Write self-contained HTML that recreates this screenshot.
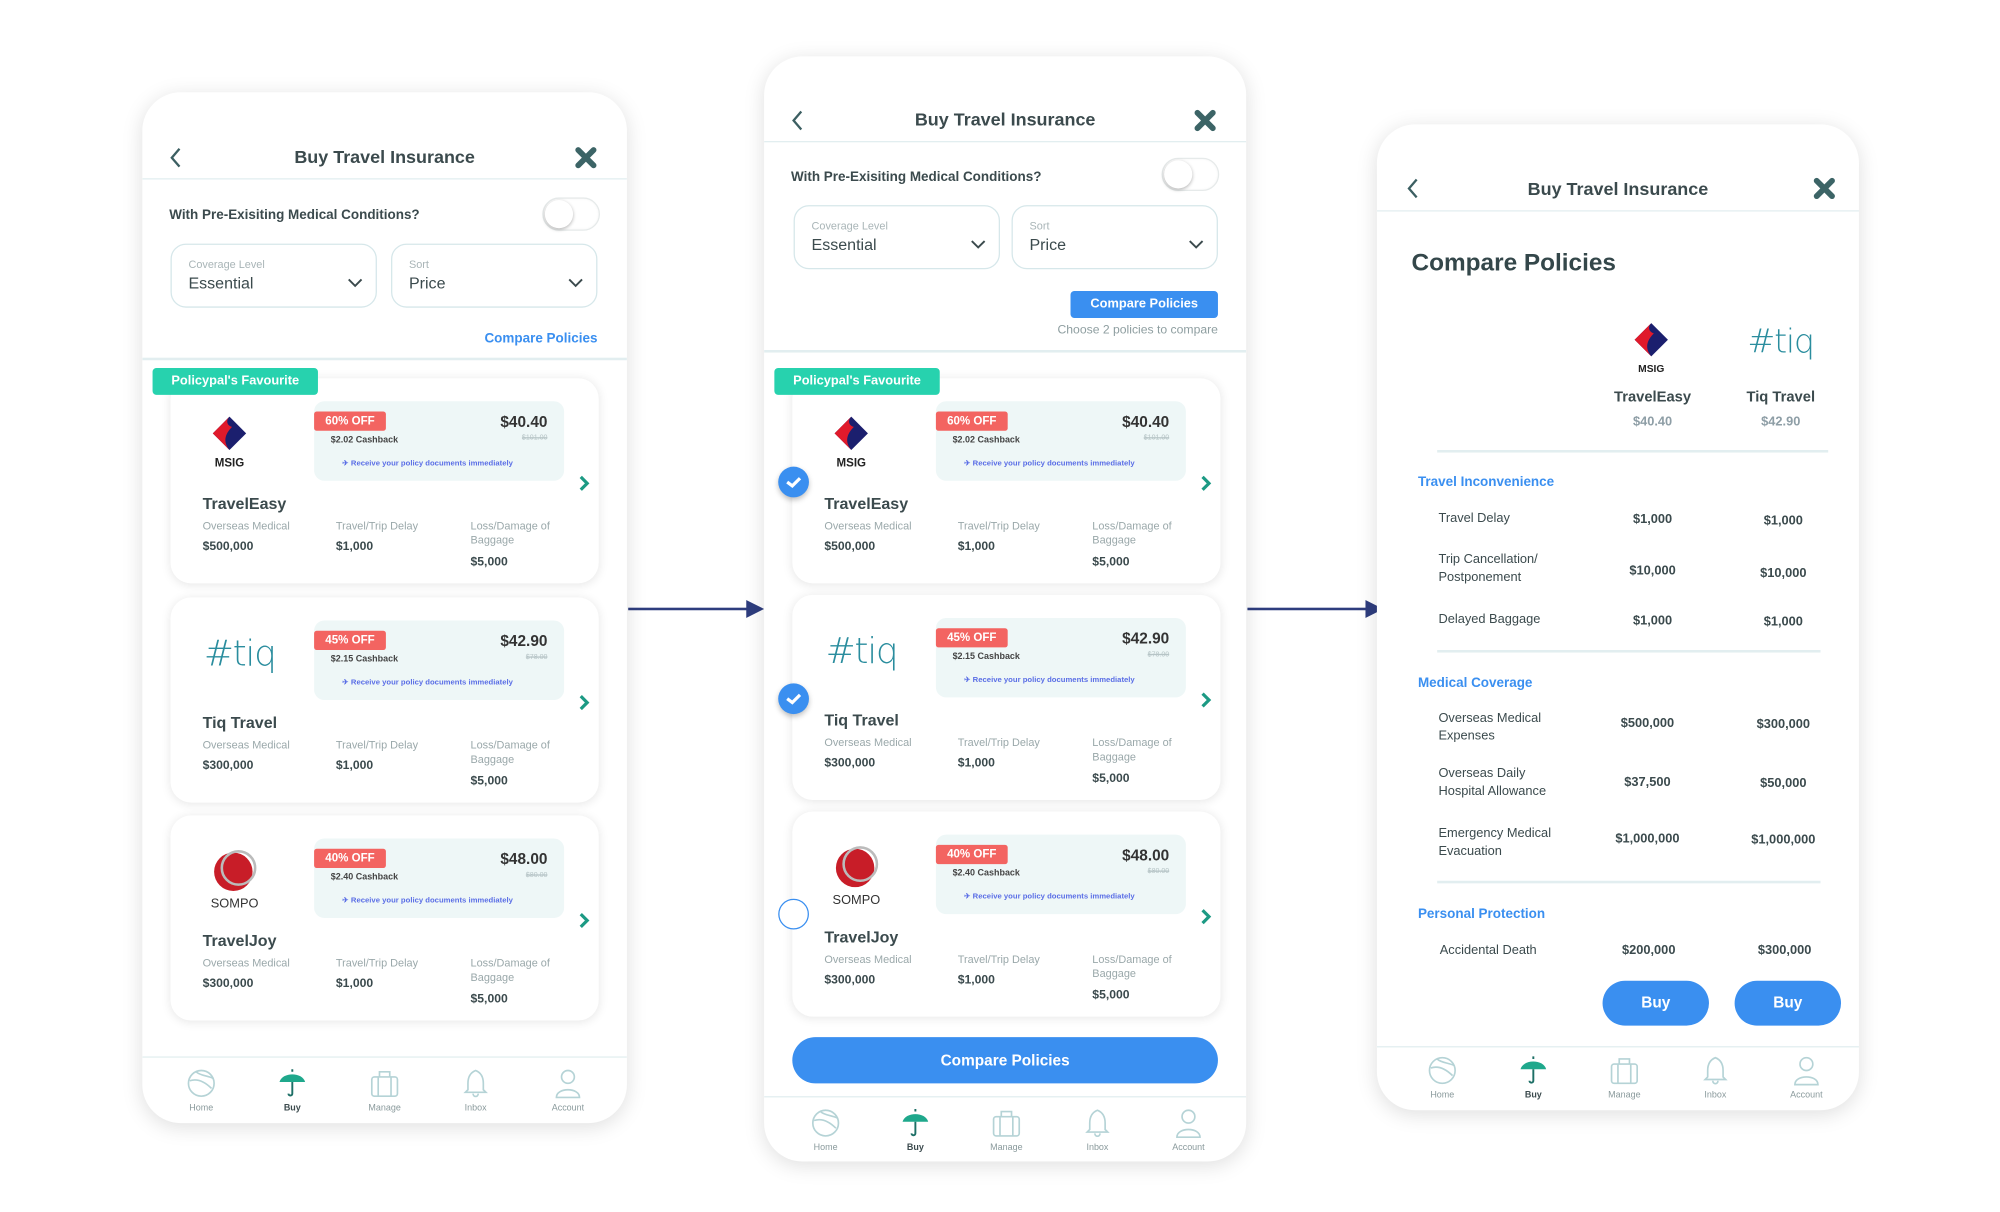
<!DOCTYPE html>
<html><head><meta charset="utf-8">
<style>
*{margin:0;padding:0;box-sizing:border-box}
html,body{width:2000px;height:1212px;overflow:hidden;background:#fff;font-family:"Liberation Sans",sans-serif;color:#3b4a4d}
#w{position:absolute;left:0;top:0;width:1560px;height:945px;transform:scale(1.28205);transform-origin:0 0}
.ph{position:absolute;background:#fff;border-radius:30px;box-shadow:0 3px 16px rgba(0,0,0,.13);overflow:hidden}
.a{position:absolute;white-space:nowrap;line-height:1}
.title{font-size:14px;font-weight:bold;color:#3b4a4d;width:100%;text-align:center;left:0}
.hl{position:absolute;left:0;right:0;height:1px;background:#e2eef0}
.pre{font-size:10.5px;font-weight:bold}
.tog{position:absolute;width:45px;height:26px;border-radius:13px;background:#fff;border:1px solid #e6eaea;box-shadow:inset 0 0 2px rgba(0,0,0,.05)}
.tog:after{content:"";position:absolute;left:1px;top:1px;width:22px;height:22px;border-radius:50%;background:#fff;box-shadow:0 1px 3px rgba(0,0,0,.3)}
.dd{position:absolute;width:161px;height:50px;border:1.5px solid #d6e7ea;border-radius:12px}
.dd .l{position:absolute;left:13px;top:11px;font-size:8.5px;color:#a9b5b7;line-height:1}
.dd .v{position:absolute;left:13px;top:24px;font-size:12.5px;color:#3b4a4d;line-height:1}
.dd svg{position:absolute;right:10px;top:26px}
.badge{position:absolute;width:129px;height:21px;background:#27d2ae;border-radius:3px;color:#fff;font-size:10px;font-weight:bold;text-align:center;line-height:21px}
.card{position:absolute;width:334px;height:160px;background:#fff;border-radius:16px;box-shadow:0 1px 8px rgba(0,0,0,.10)}
.promo{position:absolute;left:112px;top:18px;width:195px;height:62px;background:#eef7f7;border-radius:8px}
.off{position:absolute;left:0;top:8px;width:56px;height:15px;background:#f36461;border-radius:2px;color:#fff;font-size:9px;font-weight:bold;text-align:center;line-height:15px}
.cb{position:absolute;left:13px;top:27px;font-size:7px;font-weight:bold;color:#444;line-height:1}
.pr{position:absolute;right:13px;top:10px;font-size:12px;font-weight:bold;color:#333;line-height:1}
.old{position:absolute;right:13px;top:27px;font-size:5.5px;color:#b6c4c6;text-decoration:line-through;line-height:1}
.rcv{position:absolute;left:22px;top:46px;font-size:6px;font-weight:bold;color:#5a6ee6;line-height:1;white-space:nowrap}
.chev{position:absolute;left:319px;top:76px}
.nm{position:absolute;left:25px;top:92px;font-size:12.5px;font-weight:bold;color:#3b4a4d;line-height:1}
.lb{position:absolute;font-size:8.5px;color:#9aa8aa;line-height:11px}
.vl{position:absolute;font-size:9.5px;font-weight:bold;color:#3b4a4d;line-height:1}
.nav{position:absolute;left:0;right:0;height:50px;border-top:1.5px solid #e2eef0}
.ni{position:absolute;width:40px;text-align:center;font-size:7px;color:#8a9a9c;line-height:1}
.ni svg{display:block;margin:0 auto 4px}
.chk{position:absolute;width:24px;height:24px;border-radius:50%;background:#3a8ff0;box-shadow:0 2px 4px rgba(0,0,0,.25)}
.unchk{position:absolute;width:24px;height:24px;border-radius:50%;background:#fff;border:1.5px solid #3a8ff0}
.sec{position:absolute;font-size:10.5px;font-weight:bold;color:#3a8ff0;line-height:1}
.rl{position:absolute;font-size:10px;color:#3b4a4d;line-height:14px}
.rv{position:absolute;font-size:10px;font-weight:bold;color:#3b4a4d;width:100px;text-align:center;line-height:1}
.buy{position:absolute;width:83px;height:35px;border-radius:18px;background:#3a8ff0;color:#fff;font-size:12px;font-weight:bold;text-align:center;line-height:35px}
</style></head><body>
<div id="w">

<!-- arrows -->
<div style="position:absolute;left:490px;top:474px;width:96px;height:2px;background:#2e3d7e"></div>
<svg style="position:absolute;left:582px;top:468px" width="14" height="14"><path d="M0 0L14 7L0 14z" fill="#2e3d7e"/></svg>
<div style="position:absolute;left:973px;top:474px;width:96px;height:2px;background:#2e3d7e"></div>
<svg style="position:absolute;left:1065px;top:468px" width="14" height="14"><path d="M0 0L14 7L0 14z" fill="#2e3d7e"/></svg>

<!-- ===== PHONE 1 ===== -->
<div class="ph" style="left:111px;top:72px;width:378px;height:804px">
 <svg style="position:absolute;left:21px;top:43px" width="10" height="16"><path d="M8 1L2 8L8 15" stroke="#3c5f62" stroke-width="1.8" fill="none"/></svg>
 <div class="a title" style="top:43px">Buy Travel Insurance</div>
 <svg style="position:absolute;left:337px;top:42px" width="18" height="18"><path d="M3 3L15 15M15 3L3 15" stroke="#3c6466" stroke-width="4.5" stroke-linecap="round"/></svg>
 <div class="hl" style="top:67px"></div>
 <div class="a pre" style="left:21px;top:91px">With Pre-Exisiting Medical Conditions?</div>
 <div class="tog" style="left:312px;top:82px"></div>
 <div class="dd" style="left:22px;top:118px"><div class="l">Coverage Level</div><div class="v">Essential</div><svg width="12" height="8"><path d="M1 1L6 6L11 1" stroke="#3b4a4d" stroke-width="1.5" fill="none"/></svg></div>
 <div class="dd" style="left:194px;top:118px"><div class="l">Sort</div><div class="v">Price</div><svg width="12" height="8"><path d="M1 1L6 6L11 1" stroke="#3b4a4d" stroke-width="1.5" fill="none"/></svg></div>
 <div class="a" style="right:23px;top:187px;font-size:10.5px;font-weight:bold;color:#3a8ff0">Compare Policies</div>
 <div class="hl" style="top:207px;height:1.5px"></div>

 <div class="card" style="left:22px;top:223px">
  <svg style="position:absolute;left:30px;top:28px" width="32" height="44"><path d="M16 2L29 15L16 28L3 15z" fill="#1b1f6e"/><path d="M16 2L3 15L16 28C11 22 12 16 18 10C14 9 13 5 16 2z" fill="#e01a2b"/><text x="16" y="41" font-size="9" font-weight="bold" text-anchor="middle" fill="#222" font-family="Liberation Sans">MSIG</text></svg>
  <div class="promo"><div class="off">60% OFF</div><div class="cb">$2.02 Cashback</div><div class="pr">$40.40</div><div class="old">$101.00</div><div class="rcv">✈ Receive your policy documents immediately</div></div>
  <svg class="chev" width="8" height="12"><path d="M1 1L6 6L1 11" stroke="#1c9a84" stroke-width="2.5" fill="none"/></svg>
  <div class="nm">TravelEasy</div>
  <div class="lb" style="left:25px;top:110px">Overseas Medical</div><div class="vl" style="left:25px;top:127px">$500,000</div>
  <div class="lb" style="left:129px;top:110px">Travel/Trip Delay</div><div class="vl" style="left:129px;top:127px">$1,000</div>
  <div class="lb" style="left:234px;top:110px">Loss/Damage of<br>Baggage</div><div class="vl" style="left:234px;top:139px">$5,000</div>
 </div>
 <div class="badge" style="left:8px;top:215px">Policypal's Favourite</div>

 <div class="card" style="left:22px;top:394px">
  <div class="a" style="left:26px;top:30px;font-size:28px;color:#2a8d9e;font-family:'DejaVu Sans',sans-serif;font-weight:200;letter-spacing:-1px">#tiq</div>
  <div class="promo"><div class="off">45% OFF</div><div class="cb">$2.15 Cashback</div><div class="pr">$42.90</div><div class="old">$78.00</div><div class="rcv">✈ Receive your policy documents immediately</div></div>
  <svg class="chev" width="8" height="12"><path d="M1 1L6 6L1 11" stroke="#1c9a84" stroke-width="2.5" fill="none"/></svg>
  <div class="nm">Tiq Travel</div>
  <div class="lb" style="left:25px;top:110px">Overseas Medical</div><div class="vl" style="left:25px;top:127px">$300,000</div>
  <div class="lb" style="left:129px;top:110px">Travel/Trip Delay</div><div class="vl" style="left:129px;top:127px">$1,000</div>
  <div class="lb" style="left:234px;top:110px">Loss/Damage of<br>Baggage</div><div class="vl" style="left:234px;top:139px">$5,000</div>
 </div>

 <div class="card" style="left:22px;top:564px">
  <svg style="position:absolute;left:28px;top:22px" width="50" height="52"><circle cx="21" cy="22" r="15" fill="#c81d28"/><circle cx="25" cy="19" r="13" fill="none" stroke="#bbb" stroke-width="2"/><text x="22" y="50" font-size="10" text-anchor="middle" fill="#333" font-family="Liberation Sans">SOMPO</text></svg>
  <div class="promo"><div class="off">40% OFF</div><div class="cb">$2.40 Cashback</div><div class="pr">$48.00</div><div class="old">$80.00</div><div class="rcv">✈ Receive your policy documents immediately</div></div>
  <svg class="chev" width="8" height="12"><path d="M1 1L6 6L1 11" stroke="#1c9a84" stroke-width="2.5" fill="none"/></svg>
  <div class="nm">TravelJoy</div>
  <div class="lb" style="left:25px;top:110px">Overseas Medical</div><div class="vl" style="left:25px;top:127px">$300,000</div>
  <div class="lb" style="left:129px;top:110px">Travel/Trip Delay</div><div class="vl" style="left:129px;top:127px">$1,000</div>
  <div class="lb" style="left:234px;top:110px">Loss/Damage of<br>Baggage</div><div class="vl" style="left:234px;top:139px">$5,000</div>
 </div>

 <div class="nav" style="top:752px">
  <div class="ni" style="left:26px;top:8px"><svg width="24" height="24"><circle cx="12" cy="12" r="10" fill="none" stroke="#b5d3d6" stroke-width="1.3"/><path d="M3 10C9 8 15 11 20 16M8 3C11 6 17 6 21 8" fill="none" stroke="#b5d3d6" stroke-width="1.3"/></svg>Home</div>
  <div class="ni" style="left:97px;top:8px;font-weight:bold;color:#3b4a4d"><svg width="24" height="24"><path d="M2 11C4 3 20 3 22 11z" fill="#1fa88c"/><path d="M12 11V20C12 22 9 22 9 20" stroke="#1d6f66" stroke-width="1.5" fill="none"/><path d="M12 1V3" stroke="#1d6f66" stroke-width="1.5"/></svg>Buy</div>
  <div class="ni" style="left:169px;top:8px"><svg width="24" height="24"><rect x="2" y="7" width="20" height="15" rx="2" fill="none" stroke="#b5d3d6" stroke-width="1.3"/><path d="M8 7V3H16V7M7 7V22M17 7V22" fill="none" stroke="#b5d3d6" stroke-width="1.3"/></svg>Manage</div>
  <div class="ni" style="left:240px;top:8px"><svg width="24" height="24"><path d="M12 2C7 4 6 8 6 12V17L4 19H20L18 17V12C18 8 17 4 12 2zM10 20C10 23 14 23 14 20" fill="none" stroke="#b5d3d6" stroke-width="1.3"/></svg>Inbox</div>
  <div class="ni" style="left:312px;top:8px"><svg width="24" height="24"><circle cx="12" cy="7" r="5" fill="none" stroke="#b5d3d6" stroke-width="1.3"/><path d="M3 23C3 15 21 15 21 23z" fill="none" stroke="#b5d3d6" stroke-width="1.3"/></svg>Account</div>
 </div>
</div>

<!-- ===== PHONE 2 ===== -->
<div class="ph" style="left:596px;top:44px;width:376px;height:862px">
 <svg style="position:absolute;left:21px;top:42px" width="10" height="16"><path d="M8 1L2 8L8 15" stroke="#3c5f62" stroke-width="1.8" fill="none"/></svg>
 <div class="a title" style="top:42px">Buy Travel Insurance</div>
 <svg style="position:absolute;left:335px;top:41px" width="18" height="18"><path d="M3 3L15 15M15 3L3 15" stroke="#3c6466" stroke-width="4.5" stroke-linecap="round"/></svg>
 <div class="hl" style="top:66px"></div>
 <div class="a pre" style="left:21px;top:89px">With Pre-Exisiting Medical Conditions?</div>
 <div class="tog" style="left:310px;top:79px"></div>
 <div class="dd" style="left:23px;top:116px"><div class="l">Coverage Level</div><div class="v">Essential</div><svg width="12" height="8"><path d="M1 1L6 6L11 1" stroke="#3b4a4d" stroke-width="1.5" fill="none"/></svg></div>
 <div class="dd" style="left:193px;top:116px"><div class="l">Sort</div><div class="v">Price</div><svg width="12" height="8"><path d="M1 1L6 6L11 1" stroke="#3b4a4d" stroke-width="1.5" fill="none"/></svg></div>
 <div style="position:absolute;left:239px;top:183px;width:115px;height:21px;background:#3a8ff0;border-radius:3px;color:#fff;font-size:10px;font-weight:bold;text-align:center;line-height:21px">Compare Policies</div>
 <div class="a" style="right:22px;top:209px;font-size:9.5px;color:#8e9ea0">Choose 2 policies to compare</div>
 <div class="hl" style="top:229px;height:1.5px"></div>

 <div class="card" style="left:22px;top:251px">
  <svg style="position:absolute;left:30px;top:28px" width="32" height="44"><path d="M16 2L29 15L16 28L3 15z" fill="#1b1f6e"/><path d="M16 2L3 15L16 28C11 22 12 16 18 10C14 9 13 5 16 2z" fill="#e01a2b"/><text x="16" y="41" font-size="9" font-weight="bold" text-anchor="middle" fill="#222" font-family="Liberation Sans">MSIG</text></svg>
  <div class="promo"><div class="off">60% OFF</div><div class="cb">$2.02 Cashback</div><div class="pr">$40.40</div><div class="old">$101.00</div><div class="rcv">✈ Receive your policy documents immediately</div></div>
  <svg class="chev" width="8" height="12"><path d="M1 1L6 6L1 11" stroke="#1c9a84" stroke-width="2.5" fill="none"/></svg>
  <div class="nm">TravelEasy</div>
  <div class="lb" style="left:25px;top:110px">Overseas Medical</div><div class="vl" style="left:25px;top:127px">$500,000</div>
  <div class="lb" style="left:129px;top:110px">Travel/Trip Delay</div><div class="vl" style="left:129px;top:127px">$1,000</div>
  <div class="lb" style="left:234px;top:110px">Loss/Damage of<br>Baggage</div><div class="vl" style="left:234px;top:139px">$5,000</div>
 </div>
 <div class="badge" style="left:8px;top:243px">Policypal's Favourite</div>

 <div class="card" style="left:22px;top:420px">
  <div class="a" style="left:26px;top:30px;font-size:28px;color:#2a8d9e;font-family:'DejaVu Sans',sans-serif;font-weight:200;letter-spacing:-1px">#tiq</div>
  <div class="promo"><div class="off">45% OFF</div><div class="cb">$2.15 Cashback</div><div class="pr">$42.90</div><div class="old">$78.00</div><div class="rcv">✈ Receive your policy documents immediately</div></div>
  <svg class="chev" width="8" height="12"><path d="M1 1L6 6L1 11" stroke="#1c9a84" stroke-width="2.5" fill="none"/></svg>
  <div class="nm">Tiq Travel</div>
  <div class="lb" style="left:25px;top:110px">Overseas Medical</div><div class="vl" style="left:25px;top:127px">$300,000</div>
  <div class="lb" style="left:129px;top:110px">Travel/Trip Delay</div><div class="vl" style="left:129px;top:127px">$1,000</div>
  <div class="lb" style="left:234px;top:110px">Loss/Damage of<br>Baggage</div><div class="vl" style="left:234px;top:139px">$5,000</div>
 </div>

 <div class="card" style="left:22px;top:589px">
  <svg style="position:absolute;left:28px;top:22px" width="50" height="52"><circle cx="21" cy="22" r="15" fill="#c81d28"/><circle cx="25" cy="19" r="13" fill="none" stroke="#bbb" stroke-width="2"/><text x="22" y="50" font-size="10" text-anchor="middle" fill="#333" font-family="Liberation Sans">SOMPO</text></svg>
  <div class="promo"><div class="off">40% OFF</div><div class="cb">$2.40 Cashback</div><div class="pr">$48.00</div><div class="old">$80.00</div><div class="rcv">✈ Receive your policy documents immediately</div></div>
  <svg class="chev" width="8" height="12"><path d="M1 1L6 6L1 11" stroke="#1c9a84" stroke-width="2.5" fill="none"/></svg>
  <div class="nm">TravelJoy</div>
  <div class="lb" style="left:25px;top:110px">Overseas Medical</div><div class="vl" style="left:25px;top:127px">$300,000</div>
  <div class="lb" style="left:129px;top:110px">Travel/Trip Delay</div><div class="vl" style="left:129px;top:127px">$1,000</div>
  <div class="lb" style="left:234px;top:110px">Loss/Damage of<br>Baggage</div><div class="vl" style="left:234px;top:139px">$5,000</div>
 </div>

 <div class="chk" style="left:11px;top:320px"><svg width="24" height="24"><path d="M7 12L11 15L17 9" stroke="#fff" stroke-width="2.5" fill="none"/></svg></div>
 <div class="chk" style="left:11px;top:489px"><svg width="24" height="24"><path d="M7 12L11 15L17 9" stroke="#fff" stroke-width="2.5" fill="none"/></svg></div>
 <div class="unchk" style="left:11px;top:657px"></div>

 <div style="position:absolute;left:22px;top:765px;width:332px;height:36px;border-radius:18px;background:#3a8ff0;color:#fff;font-size:12px;font-weight:bold;text-align:center;line-height:36px">Compare Policies</div>

 <div class="nav" style="top:811px">
  <div class="ni" style="left:28px;top:8px"><svg width="24" height="24"><circle cx="12" cy="12" r="10" fill="none" stroke="#b5d3d6" stroke-width="1.3"/><path d="M3 10C9 8 15 11 20 16M8 3C11 6 17 6 21 8" fill="none" stroke="#b5d3d6" stroke-width="1.3"/></svg>Home</div>
  <div class="ni" style="left:98px;top:8px;font-weight:bold;color:#3b4a4d"><svg width="24" height="24"><path d="M2 11C4 3 20 3 22 11z" fill="#1fa88c"/><path d="M12 11V20C12 22 9 22 9 20" stroke="#1d6f66" stroke-width="1.5" fill="none"/><path d="M12 1V3" stroke="#1d6f66" stroke-width="1.5"/></svg>Buy</div>
  <div class="ni" style="left:169px;top:8px"><svg width="24" height="24"><rect x="2" y="7" width="20" height="15" rx="2" fill="none" stroke="#b5d3d6" stroke-width="1.3"/><path d="M8 7V3H16V7M7 7V22M17 7V22" fill="none" stroke="#b5d3d6" stroke-width="1.3"/></svg>Manage</div>
  <div class="ni" style="left:240px;top:8px"><svg width="24" height="24"><path d="M12 2C7 4 6 8 6 12V17L4 19H20L18 17V12C18 8 17 4 12 2zM10 20C10 23 14 23 14 20" fill="none" stroke="#b5d3d6" stroke-width="1.3"/></svg>Inbox</div>
  <div class="ni" style="left:311px;top:8px"><svg width="24" height="24"><circle cx="12" cy="7" r="5" fill="none" stroke="#b5d3d6" stroke-width="1.3"/><path d="M3 23C3 15 21 15 21 23z" fill="none" stroke="#b5d3d6" stroke-width="1.3"/></svg>Account</div>
 </div>
</div>

<!-- ===== PHONE 3 ===== -->
<div class="ph" style="left:1074px;top:97px;width:376px;height:769px">
 <svg style="position:absolute;left:23px;top:42px" width="10" height="16"><path d="M8 1L2 8L8 15" stroke="#3c5f62" stroke-width="1.8" fill="none"/></svg>
 <div class="a title" style="top:43px">Buy Travel Insurance</div>
 <svg style="position:absolute;left:340px;top:41px" width="18" height="18"><path d="M3 3L15 15M15 3L3 15" stroke="#3c6466" stroke-width="4.5" stroke-linecap="round"/></svg>
 <div class="hl" style="top:67px"></div>
 <div class="a" style="left:27px;top:99px;font-size:19px;font-weight:bold;color:#34474a">Compare Policies</div>

 <svg style="position:absolute;left:198px;top:153px" width="32" height="44"><path d="M16 2L29 15L16 28L3 15z" fill="#1b1f6e"/><path d="M16 2L3 15L16 28C11 22 12 16 18 10C14 9 13 5 16 2z" fill="#e01a2b"/><text x="16" y="40" font-size="8" font-weight="bold" text-anchor="middle" fill="#222" font-family="Liberation Sans">MSIG</text></svg>
 <div class="a" style="left:289px;top:157px;font-size:26px;color:#2a8d9e;font-family:'DejaVu Sans',sans-serif;font-weight:200;letter-spacing:-1px">#tiq</div>
 <div class="rv" style="left:165px;top:208px;font-size:11.5px">TravelEasy</div>
 <div class="rv" style="left:265px;top:208px;font-size:11.5px">Tiq Travel</div>
 <div class="rv" style="left:165px;top:228px;color:#8e9ea6">$40.40</div>
 <div class="rv" style="left:265px;top:228px;color:#8e9ea6">$42.90</div>
 <div class="hl" style="top:254px;left:47px;right:24px;height:1.5px"></div>

 <div class="sec" style="left:32px;top:274px">Travel Inconvenience</div>
 <div class="rl" style="left:48px;top:301px">Travel Delay</div><div class="rv" style="left:165px;top:304px">$1,000</div><div class="rv" style="left:267px;top:305px">$1,000</div>
 <div class="rl" style="left:48px;top:333px">Trip Cancellation/<br>Postponement</div><div class="rv" style="left:165px;top:344px">$10,000</div><div class="rv" style="left:267px;top:346px">$10,000</div>
 <div class="rl" style="left:48px;top:380px">Delayed Baggage</div><div class="rv" style="left:165px;top:383px">$1,000</div><div class="rv" style="left:267px;top:384px">$1,000</div>
 <div class="hl" style="top:410px;left:47px;right:30px;height:1.5px"></div>

 <div class="sec" style="left:32px;top:431px">Medical Coverage</div>
 <div class="rl" style="left:48px;top:457px">Overseas Medical<br>Expenses</div><div class="rv" style="left:161px;top:463px">$500,000</div><div class="rv" style="left:267px;top:464px">$300,000</div>
 <div class="rl" style="left:48px;top:500px">Overseas Daily<br>Hospital Allowance</div><div class="rv" style="left:161px;top:509px">$37,500</div><div class="rv" style="left:267px;top:510px">$50,000</div>
 <div class="rl" style="left:48px;top:547px">Emergency Medical<br>Evacuation</div><div class="rv" style="left:161px;top:553px">$1,000,000</div><div class="rv" style="left:267px;top:554px">$1,000,000</div>
 <div class="hl" style="top:590px;left:47px;right:30px;height:1.5px"></div>

 <div class="sec" style="left:32px;top:611px">Personal Protection</div>
 <div class="rl" style="left:49px;top:638px">Accidental Death</div><div class="rv" style="left:162px;top:640px">$200,000</div><div class="rv" style="left:268px;top:640px">$300,000</div>
 <div class="buy" style="left:176px;top:668px">Buy</div>
 <div class="buy" style="left:279px;top:668px">Buy</div>

 <div class="nav" style="top:719px">
  <div class="ni" style="left:31px;top:6px"><svg width="24" height="24"><circle cx="12" cy="12" r="10" fill="none" stroke="#b5d3d6" stroke-width="1.3"/><path d="M3 10C9 8 15 11 20 16M8 3C11 6 17 6 21 8" fill="none" stroke="#b5d3d6" stroke-width="1.3"/></svg>Home</div>
  <div class="ni" style="left:102px;top:6px;font-weight:bold;color:#3b4a4d"><svg width="24" height="24"><path d="M2 11C4 3 20 3 22 11z" fill="#1fa88c"/><path d="M12 11V20C12 22 9 22 9 20" stroke="#1d6f66" stroke-width="1.5" fill="none"/><path d="M12 1V3" stroke="#1d6f66" stroke-width="1.5"/></svg>Buy</div>
  <div class="ni" style="left:173px;top:6px"><svg width="24" height="24"><rect x="2" y="7" width="20" height="15" rx="2" fill="none" stroke="#b5d3d6" stroke-width="1.3"/><path d="M8 7V3H16V7M7 7V22M17 7V22" fill="none" stroke="#b5d3d6" stroke-width="1.3"/></svg>Manage</div>
  <div class="ni" style="left:244px;top:6px"><svg width="24" height="24"><path d="M12 2C7 4 6 8 6 12V17L4 19H20L18 17V12C18 8 17 4 12 2zM10 20C10 23 14 23 14 20" fill="none" stroke="#b5d3d6" stroke-width="1.3"/></svg>Inbox</div>
  <div class="ni" style="left:315px;top:6px"><svg width="24" height="24"><circle cx="12" cy="7" r="5" fill="none" stroke="#b5d3d6" stroke-width="1.3"/><path d="M3 23C3 15 21 15 21 23z" fill="none" stroke="#b5d3d6" stroke-width="1.3"/></svg>Account</div>
 </div>
</div>

</div>
</body></html>
